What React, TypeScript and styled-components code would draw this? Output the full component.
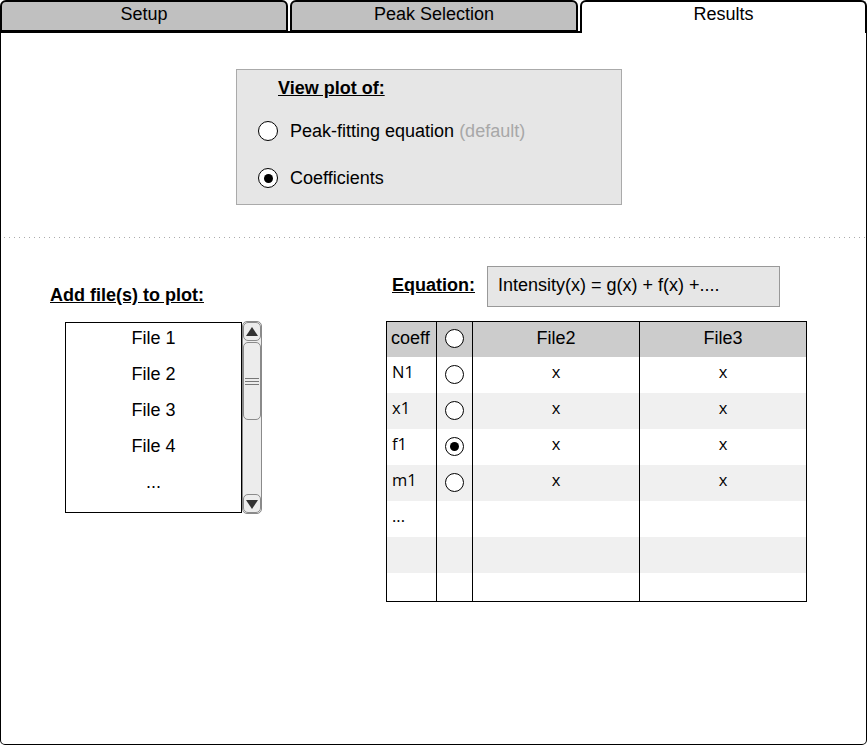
import React from "react";
import styled, { createGlobalStyle } from "styled-components";

const Global = createGlobalStyle`
  html, body { margin: 0; padding: 0; background: #fff; }
  body { font-family: "Liberation Sans", Arial, sans-serif; color: #000; }
`;

const Page = styled.div`
  width: 867px;
  height: 745px;
  display: flex;
  flex-direction: column;
  box-sizing: border-box;
`;

const TabBar = styled.div`
  display: flex;
  gap: 2px;
  height: 33px;
  position: relative;
  z-index: 1;
  margin-bottom: -2px;
`;

const Tab = styled.div<{ $active?: boolean; $w: number }>`
  width: ${(p) => p.$w}px;
  box-sizing: border-box;
  height: ${(p) => (p.$active ? 33 : 32)}px;
  border: 2px solid #000;
  border-bottom: ${(p) => (p.$active ? "none" : "2px solid #000")};
  border-radius: 6px 6px 0 0;
  background: ${(p) => (p.$active ? "#fff" : "#c0c0c0")};
  display: flex;
  justify-content: center;
  align-items: flex-start;
  padding-top: 2px;
  font-size: 18px;
  line-height: 20px;
`;

const Panel = styled.div`
  flex: 1;
  box-sizing: border-box;
  border: 1.5px solid #000;
  border-top: 2px solid #000;
  border-radius: 0 0 5px 5px;
  display: flex;
  flex-direction: column;
`;

const TopSection = styled.div`
  height: 204px;
  padding: 36px 0 0 235px;
  box-sizing: border-box;
`;

const ViewBox = styled.div`
  width: 386px;
  height: 136px;
  box-sizing: border-box;
  background: #e6e6e6;
  border: 1px solid #aaa;
  padding: 8px 0 0 21px;
  display: flex;
  flex-direction: column;
`;

const Heading = styled.div<{ $indent?: number }>`
  font-weight: bold;
  text-decoration: underline;
  font-size: 18px;
  line-height: 20px;
  margin-left: ${(p) => p.$indent ?? 0}px;
`;

const RadioRow = styled.div<{ $top: number }>`
  display: flex;
  align-items: center;
  gap: 12px;
  margin-top: ${(p) => p.$top}px;
  font-size: 18px;
  line-height: 20px;
`;

const Radio = styled.span<{ $checked?: boolean; $size?: number }>`
  width: ${(p) => p.$size ?? 20}px;
  height: ${(p) => p.$size ?? 20}px;
  box-sizing: border-box;
  border: 1.4px solid #000;
  border-radius: 50%;
  background: #fff;
  display: inline-flex;
  align-items: center;
  justify-content: center;
  flex: none;
  &::after {
    content: "";
    display: ${(p) => (p.$checked ? "block" : "none")};
    width: 9px;
    height: 9px;
    border-radius: 50%;
    background: #000;
  }
`;

const Muted = styled.span`
  color: #a8a8a8;
`;

const DottedLine = styled.div`
  height: 1px;
  background: repeating-linear-gradient(to right, #aaa 0 1px, transparent 1px 5px);
  background-position: 3px 0;
`;

const Lower = styled.div`
  display: flex;
  padding: 28px 0 0 49px;
`;

const LeftCol = styled.div`
  width: 336px;
  flex: none;
  padding-top: 19px;
  display: flex;
  flex-direction: column;
`;

const ListWrap = styled.div`
  display: flex;
  margin: 16px 0 0 15px;
  align-items: flex-start;
`;

const ListBox = styled.div`
  width: 177px;
  height: 191px;
  box-sizing: border-box;
  border: 1px solid #000;
  display: flex;
  flex-direction: column;
  gap: 8px;
  margin-top: 1px;
  padding-top: 1px;
`;

const ListItem = styled.div`
  text-align: center;
  font-size: 18px;
  line-height: 28px;
`;

const ScrollBar = styled.div`
  width: 20px;
  height: 193px;
  box-sizing: border-box;
  border: 1px solid #8a8a8a;
  border-radius: 5px;
  background: #ececec;
  display: flex;
  flex-direction: column;
  justify-content: space-between;
  position: relative;
`;

const ScrollBtn = styled.div`
  width: 18px;
  height: 19px;
  box-sizing: border-box;
  border: 1px solid #8a8a8a;
  border-radius: 5px;
  background: #ececec;
  display: flex;
  align-items: center;
  justify-content: center;
`;

const Thumb = styled.div`
  position: absolute;
  left: 0;
  top: 20px;
  width: 18px;
  height: 78px;
  box-sizing: border-box;
  border: 1px solid #8a8a8a;
  border-radius: 5px;
  background: #ececec;
  display: flex;
  flex-direction: column;
  justify-content: center;
  align-items: center;
  gap: 2px;
`;

const Grip = styled.span`
  width: 14px;
  height: 1px;
  background: #777;
`;

const RightCol = styled.div`
  display: flex;
  flex-direction: column;
`;

const EqRow = styled.div`
  display: flex;
  align-items: center;
`;

const EqLabel = styled(Heading)`
  width: 101px;
  box-sizing: border-box;
  padding-left: 6px;
  margin-top: -3px;
`;

const EqBox = styled.div`
  width: 293px;
  height: 41px;
  box-sizing: border-box;
  background: #e6e6e6;
  border: 1px solid #999;
  padding: 0 10px 3px;
  display: flex;
  align-items: center;
  font-size: 18px;
`;

const Table = styled.table`
  margin-top: 14px;
  width: 420px;
  border-collapse: collapse;
  border: 1px solid #000;
  table-layout: fixed;
`;

const Th = styled.th<{ $left?: boolean }>`
  height: 35px;
  padding: 0 0 0 ${(p) => (p.$left ? 4 : 0)}px;
  background: #cccccc;
  font-weight: normal;
  font-size: 18px;
  text-align: ${(p) => (p.$left ? "left" : "center")};
  border-left: 1px solid #000;
  border-right: 1px solid #000;
  vertical-align: middle;
  box-sizing: border-box;
`;

const HeadText = styled.div`
  line-height: 20px;
  margin-top: -3px;
`;

const Tr = styled.tr<{ $alt?: boolean }>`
  background: ${(p) => (p.$alt ? "#f0f0f0" : "#fff")};
`;

const Td = styled.td<{ $left?: boolean; $h?: number }>`
  height: ${(p) => p.$h ?? 36}px;
  padding: 0 0 0 ${(p) => (p.$left ? 5 : 0)}px;
  font-family: "Open Sans", "Liberation Sans", sans-serif;
  font-size: 16.5px;
  text-align: ${(p) => (p.$left ? "left" : "center")};
  border-left: 1px solid #000;
  border-right: 1px solid #000;
  vertical-align: middle;
  box-sizing: border-box;
`;

const CellText = styled.div`
  line-height: 20px;
  margin-top: -5px;
`;

const RadioCell = styled.div`
  display: flex;
  justify-content: center;
  margin-top: -1px;
`;

const Tri = ({ down }: { down?: boolean }) => (
  <svg width="14" height="12" viewBox="0 0 14 12">
    <polygon points={down ? "1,2 13,2 7,11" : "1,10 13,10 7,1"} fill="#333" />
  </svg>
);

const rows = [
  { name: "N1", radio: true, checked: false, vals: true },
  { name: "x1", radio: true, checked: false, vals: true },
  { name: "f1", radio: true, checked: true, vals: true },
  { name: "m1", radio: true, checked: false, vals: true },
  { name: "...", radio: false, checked: false, vals: false },
  { name: "", radio: false, checked: false, vals: false },
  { name: "", radio: false, checked: false, vals: false },
];

export default function App() {
  return (
    <Page>
      <Global />
      <TabBar>
        <Tab $w={288}>Setup</Tab>
        <Tab $w={288}>Peak Selection</Tab>
        <Tab $w={287} $active>Results</Tab>
      </TabBar>
      <Panel>
        <TopSection>
          <ViewBox>
            <Heading $indent={20}>View plot of:</Heading>
            <RadioRow $top={23}>
              <Radio />
              <span>
                Peak-fitting equation <Muted>(default)</Muted>
              </span>
            </RadioRow>
            <RadioRow $top={27}>
              <Radio $checked />
              <span>Coefficients</span>
            </RadioRow>
          </ViewBox>
        </TopSection>
        <DottedLine />
        <Lower>
          <LeftCol>
            <Heading>Add file(s) to plot:</Heading>
            <ListWrap>
              <ListBox>
                <ListItem>File 1</ListItem>
                <ListItem>File 2</ListItem>
                <ListItem>File 3</ListItem>
                <ListItem>File 4</ListItem>
                <ListItem>...</ListItem>
              </ListBox>
              <ScrollBar>
                <ScrollBtn>
                  <Tri />
                </ScrollBtn>
                <Thumb>
                  <Grip />
                  <Grip />
                  <Grip />
                </Thumb>
                <ScrollBtn>
                  <Tri down />
                </ScrollBtn>
              </ScrollBar>
            </ListWrap>
          </LeftCol>
          <RightCol>
            <EqRow>
              <EqLabel>Equation:</EqLabel>
              <EqBox>Intensity(x) = g(x) + f(x) +....</EqBox>
            </EqRow>
            <Table>
              <colgroup>
                <col style={{ width: 50 }} />
                <col style={{ width: 36 }} />
                <col style={{ width: 167 }} />
                <col style={{ width: 167 }} />
              </colgroup>
              <thead>
                <tr>
                  <Th $left>
                    <HeadText>coeff</HeadText>
                  </Th>
                  <Th>
                    <RadioCell>
                      <Radio $size={19} />
                    </RadioCell>
                  </Th>
                  <Th>
                    <HeadText>File2</HeadText>
                  </Th>
                  <Th>
                    <HeadText>File3</HeadText>
                  </Th>
                </tr>
              </thead>
              <tbody>
                {rows.map((r, i) => {
                  const h = i === 6 ? 29 : 36;
                  return (
                    <Tr key={i} $alt={i % 2 === 1}>
                      <Td $left $h={h}>
                        <CellText>{r.name}</CellText>
                      </Td>
                      <Td $h={h}>
                        {r.radio && (
                          <RadioCell>
                            <Radio $size={19} $checked={r.checked} />
                          </RadioCell>
                        )}
                      </Td>
                      <Td $h={h}>
                        <CellText>{r.vals ? "x" : ""}</CellText>
                      </Td>
                      <Td $h={h}>
                        <CellText>{r.vals ? "x" : ""}</CellText>
                      </Td>
                    </Tr>
                  );
                })}
              </tbody>
            </Table>
          </RightCol>
        </Lower>
      </Panel>
    </Page>
  );
}
